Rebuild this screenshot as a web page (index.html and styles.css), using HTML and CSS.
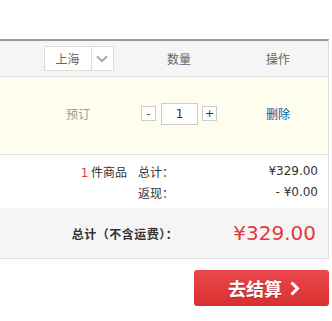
FILE: index.html
```html
<!DOCTYPE html>
<html>
<head>
<meta charset="utf-8">
<link rel="stylesheet" href="styles.css">
</head>
<body>
<div class="cart">
  <div class="head">
    <div class="col c1">
      <div class="select">
        <span class="sel-text">上海</span>
        <span class="sel-arrow"><svg width="12" height="8" viewBox="0 0 12 8"><path d="M1 1.2 L6 6 L11 1.2" fill="none" stroke="#aaa" stroke-width="2"/></svg></span>
      </div>
    </div>
    <div class="col c2">数量</div>
    <div class="col c3">操作</div>
  </div>
  <div class="item">
    <div class="col c1 status">预订</div>
    <div class="col c2">
      <div class="qty">
        <span class="qbtn">-</span>
        <span class="qinput">1</span>
        <span class="qbtn">+</span>
      </div>
    </div>
    <div class="col c3"><a class="del">删除</a></div>
  </div>
  <div class="summary">
    <div class="count"><span class="num">1</span> 件商品</div>
    <div class="sum-table">
      <span class="lbl">总计：</span><span class="val">¥329.00</span>
      <span class="lbl">返现：</span><span class="val">- ¥0.00</span>
    </div>
  </div>
  <div class="total">
    <span class="total-lbl">总计（不含运费）：</span>
    <span class="total-price">¥329.00</span>
  </div>
</div>
<div class="actions">
  <a class="checkout">去结算<svg class="chev" width="12" height="15" viewBox="0 0 12 15"><path d="M2.5 1.5 L8.5 7.5 L2.5 13.5" fill="none" stroke="#fff" stroke-width="3"/></svg></a>
</div>
</body>
</html>
```
FILE: styles.css
```css
* { box-sizing: border-box; }
html, body { margin: 0; padding: 0; background: #fff; }
body {
  font-family: "Noto Sans CJK SC", "DejaVu Sans", sans-serif;
  font-size: 12px;
  color: #333;
  padding-top: 39px;
  width: 332px;
}
.cart {
  width: 329px;
  border-top: 2px solid #999;
  border-right: 1px solid #ddd;
}
.head {
  display: flex;
  align-items: center;
  height: 36px;
  background: #f5f5f5;
  border-bottom: 1px solid #ddd;
  color: #666;
}
.col { display: flex; justify-content: center; align-items: center; }
.c1 { width: 126px; padding-left: 30px; }
.c2 { width: 106px; }
.c3 { width: 92px; }
.select {
  display: flex;
  width: 70px;
  height: 25px;
  border: 1px solid #ddd;
  background: #fff;
  margin-left: 1px;
}
.sel-text {
  width: 46px;
  display: flex;
  align-items: center;
  justify-content: center;
  color: #666;
}
.sel-arrow {
  width: 22px;
  border-left: 1px solid #ddd;
  display: flex;
  align-items: center;
  justify-content: center;
}
.item {
  display: flex;
  align-items: center;
  height: 78px;
  padding-bottom: 4px;
  background: #fffdee;
  border-bottom: 1px solid #ddd;
}
.status { color: #999; }
.qty { display: flex; align-items: center; }
.qbtn {
  width: 15px;
  height: 15px;
  border: 1px solid #ccc;
  background: #fff;
  display: flex;
  align-items: center;
  justify-content: center;
  font-family: "DejaVu Sans", sans-serif;
  font-size: 11px;
  line-height: 1;
  color: #333;
}
.qinput {
  width: 37px;
  height: 22px;
  margin: 0 4px 0 5px;
  border: 1px solid #ccc;
  background: #fff;
  display: flex;
  align-items: center;
  justify-content: center;
  color: #3b1a8f;
  font-family: "DejaVu Sans", sans-serif;
  font-size: 12px;
}
.del { color: #005ea7; text-decoration: none; }
.summary {
  display: flex;
  justify-content: flex-end;
  align-items: flex-start;
  height: 53px;
  padding: 6px 10px 0 0;
  background: #fff;
}
.count { margin-right: 11px; line-height: 21px; }
.num { color: #e4393c; font-family: "DejaVu Sans", sans-serif; }
.sum-table {
  display: grid;
  grid-template-columns: 36px 144px;
  line-height: 21px;
}
.val {
  text-align: right;
  font-family: "DejaVu Sans", sans-serif;
  font-size: 12px;
  color: #333;
}
.total {
  display: flex;
  justify-content: flex-end;
  align-items: center;
  height: 51px;
  padding-right: 12px;
  background: #f5f5f5;
  border-bottom: 1px solid #ddd;
}
.total-lbl { font-weight: bold; color: #333; letter-spacing: 0.5px; }
.total-price {
  margin-left: 55px;
  color: #e4393c;
  font-family: "DejaVu Sans", sans-serif;
  font-size: 20px;
}
.actions {
  display: flex;
  width: 329px;
  justify-content: flex-end;
  margin-top: 11px;
}
.checkout {
  width: 135px;
  height: 36px;
  display: flex;
  align-items: center;
  justify-content: center;
  gap: 7px;
  padding-left: 6px;
  border-radius: 3px;
  background: linear-gradient(#e9484d, #d9302f);
  color: #fff;
  font-size: 18px;
  font-weight: bold;
  text-shadow: 0 1px 1px rgba(0,0,0,0.25);
  text-decoration: none;
}
.chev { display: block; }
```
